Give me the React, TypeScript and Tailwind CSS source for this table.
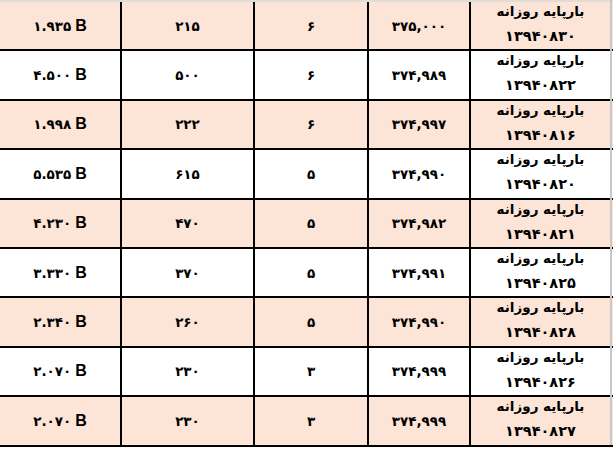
const rows = [
  { vol: "۱.۹۳۵", count: "۲۱۵", trades: "۶", price: "۳۷۵,۰۰۰", date: "۱۳۹۴۰۸۳۰" },
  { vol: "۴.۵۰۰", count: "۵۰۰", trades: "۶", price: "۳۷۴,۹۸۹", date: "۱۳۹۴۰۸۲۲" },
  { vol: "۱.۹۹۸", count: "۲۲۲", trades: "۶", price: "۳۷۴,۹۹۷", date: "۱۳۹۴۰۸۱۶" },
  { vol: "۵.۵۳۵", count: "۶۱۵", trades: "۵", price: "۳۷۴,۹۹۰", date: "۱۳۹۴۰۸۲۰" },
  { vol: "۴.۲۳۰", count: "۴۷۰", trades: "۵", price: "۳۷۴,۹۸۲", date: "۱۳۹۴۰۸۲۱" },
  { vol: "۳.۳۳۰", count: "۳۷۰", trades: "۵", price: "۳۷۴,۹۹۱", date: "۱۳۹۴۰۸۲۵" },
  { vol: "۲.۳۴۰", count: "۲۶۰", trades: "۵", price: "۳۷۴,۹۹۰", date: "۱۳۹۴۰۸۲۸" },
  { vol: "۲.۰۷۰", count: "۲۳۰", trades: "۳", price: "۳۷۴,۹۹۹", date: "۱۳۹۴۰۸۲۶" },
  { vol: "۲.۰۷۰", count: "۲۳۰", trades: "۳", price: "۳۷۴,۹۹۹", date: "۱۳۹۴۰۸۲۷" },
]

export default function App() {
  return (
    <div className="w-[613px] h-[451px] bg-white font-['DejaVu_Sans',sans-serif] font-bold text-black border-t-2 border-[#e2dcd7]">
      {rows.map((row, i) => (
        <div
          key={i}
          className={`flex h-[49.4px] border-b-2 border-black ${i % 2 === 0 ? "bg-[#fce4d6]" : "bg-white"}`}
        >
          {/* volume */}
          <div className="w-[122px] border-r-2 border-black flex items-center justify-center">
            <span dir="ltr" className="text-[13.5px] flex items-baseline gap-[4px]">
              <span>{row.vol}</span>
              <span className="font-['Liberation_Sans',sans-serif] text-[16px]">B</span>
            </span>
          </div>
          {/* count */}
          <div className="w-[133px] border-r-2 border-black flex items-center justify-center text-[13.5px]">
            <span dir="ltr">{row.count}</span>
          </div>
          {/* trades */}
          <div className="w-[114px] border-r-2 border-black flex items-center justify-center text-[13.5px]">
            {row.trades}
          </div>
          {/* price */}
          <div className="w-[102px] border-r-2 border-black flex items-center justify-center text-[13.5px]">
            <span dir="ltr">{row.price}</span>
          </div>
          {/* name + date */}
          <div dir="rtl" className="w-[141px] border-r-2 border-[#c8c8c8] flex flex-col items-center -mt-[2px]">
            <span className="h-[23px] leading-[23px] text-[13.5px]">بارپایه روزانه</span>
            <span dir="ltr" className="h-[27px] leading-[27px] text-[14.5px]">{row.date}</span>
          </div>
        </div>
      ))}
    </div>
  )
}
